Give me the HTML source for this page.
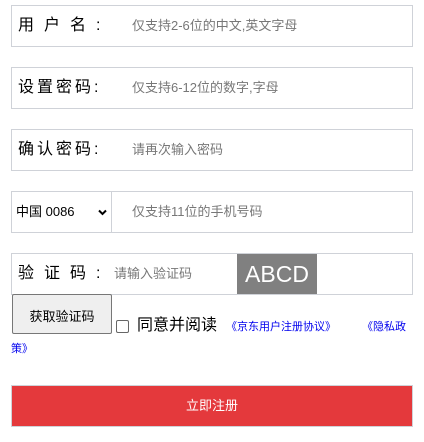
<!DOCTYPE html>
<html><head><meta charset="utf-8"><style>
body{margin:0;width:424px;height:442px;background:#fff;font-family:"Liberation Sans","Noto Sans CJK SC",sans-serif;position:relative;overflow:hidden}
.box{position:absolute;left:11px;width:400px;height:40px;border:1px solid #cfd2d8;}
.lab{position:absolute;left:6px;top:10px;font-size:16px;color:#000;line-height:20px;white-space:nowrap}
.ph{position:absolute;font-size:13px;color:#777;top:12px;line-height:16px;white-space:nowrap}
</style></head><body>
<div class="box" style="top:5px"><div class="lab" style="letter-spacing:10px">用户名:</div><div class="ph" style="left:120px">仅支持2-6位的中文,英文字母</div></div>
<div class="box" style="top:67px"><div class="lab" style="letter-spacing:3px">设置密码:</div><div class="ph" style="left:120px">仅支持6-12位的数字,字母</div></div>
<div class="box" style="top:129px"><div class="lab" style="letter-spacing:3px">确认密码:</div><div class="ph" style="left:120px">请再次输入密码</div></div>
<div class="box" style="top:191px"><div style="position:absolute;left:0;top:0;width:99px;height:40px;border-right:1px solid #cfd2d8"><div style="position:absolute;left:4px;top:12px;font-size:13px;color:#000;line-height:16px">中国 0086</div><svg style="position:absolute;left:86px;top:17px" width="9" height="7" viewBox="0 0 9 7"><path d="M1 1.5L4.5 5L8 1.5" stroke="#000" stroke-width="2" fill="none"/></svg></div><div class="ph" style="left:120px">仅支持11位的手机号码</div></div>
<div class="box" style="top:253px"><div class="lab" style="letter-spacing:10px">验证码:</div><div class="ph" style="left:102px">请输入验证码</div><div style="position:absolute;left:225px;top:0;width:80px;height:40px;background:#808080;color:#fff;font-size:23px;line-height:40px;text-align:center">ABCD</div></div>
<div style="position:absolute;left:12px;top:294px;width:98px;height:38px;border:1px solid #777;border-radius:2px;background:#efefef;font-size:13px;display:flex;align-items:center;justify-content:center;color:#000;padding-top:3px;box-sizing:content-box;height:35px">获取验证码</div>
<div style="position:absolute;left:116px;top:320px;width:11px;height:11px;border:1px solid #666;border-radius:2px"></div>
<div style="position:absolute;left:137px;top:316px;font-size:16px;color:#000;line-height:20px">同意并阅读</div>
<div style="position:absolute;left:226px;top:319px;font-size:11px;color:#00e;line-height:16px">《京东用户注册协议》</div>
<div style="position:absolute;left:362px;top:319px;font-size:11px;color:#00e;line-height:16px">《隐私政</div>
<div style="position:absolute;left:11px;top:341px;font-size:11px;color:#00e;line-height:16px">策》</div>
<div style="position:absolute;left:11px;top:385px;width:400px;height:40px;border:1px solid #cfd2d8;background:#e4393c;color:#fff;font-size:13px;line-height:40px;text-align:center">立即注册</div>
</body></html>
